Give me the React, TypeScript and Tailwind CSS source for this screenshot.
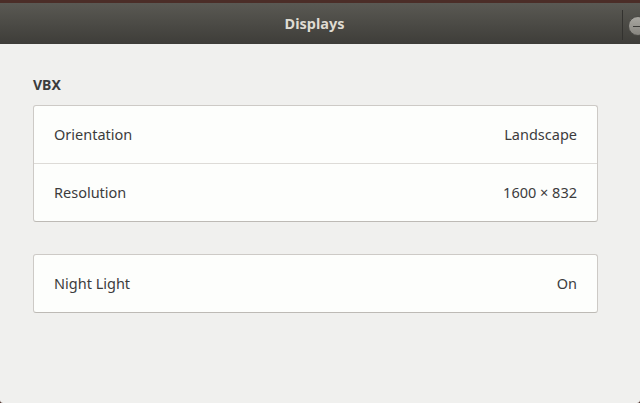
export default function App() {
  return (
    <div className="flex h-[403px] w-[640px] flex-col overflow-hidden bg-[#4a2c26] font-['Noto_Sans',sans-serif]">
      <div className="h-[3px] shrink-0 bg-[#4b2d27]" />
      <div className="relative flex h-[41px] shrink-0 items-center justify-center bg-gradient-to-b from-[#5a5953] to-[#3e3d39] pr-[11px]">
        <span className="text-[14.5px] font-bold text-[#dfdbd2]">Displays</span>
        <div className="absolute right-[17px] top-[7px] h-[30px] w-px bg-[#33322f]" />
        <div className="absolute left-[628px] top-[13px] h-[20px] w-[20px] rounded-full border border-[#4c4b47] bg-gradient-to-b from-[#a9a7a1] to-[#87857f]">
          <div className="absolute left-[4px] top-[8.5px] h-[1.5px] w-[8px] bg-[#3c3b38]" />
        </div>
      </div>
      <div className="flex flex-1 flex-col rounded-b-[3px] bg-[#f0f0ee] pl-[33px] pr-[42px] pt-[32px]">
        <h2 className="mb-[12px] text-[14px] font-bold leading-[17px] text-[#3c3c3c]">VBX</h2>
        <div className="flex flex-col rounded-[3px] border border-[#cdcac6] border-b-[#bdbab5] bg-[#fdfefc] text-[14.5px] text-[#3c3c3c]">
          <div className="flex h-[58px] items-center justify-between border-b border-[#dddbd7] px-5">
            <span>Orientation</span>
            <span>Landscape</span>
          </div>
          <div className="flex h-[57px] items-center justify-between px-5">
            <span>Resolution</span>
            <span>1600 × 832</span>
          </div>
        </div>
        <div className="mt-[32px] flex flex-col rounded-[3px] border border-[#cdcac6] border-b-[#bdbab5] bg-[#fdfefc] text-[14.5px] text-[#3c3c3c]">
          <div className="flex h-[57px] items-center justify-between px-5">
            <span>Night Light</span>
            <span>On</span>
          </div>
        </div>
      </div>
    </div>
  );
}
